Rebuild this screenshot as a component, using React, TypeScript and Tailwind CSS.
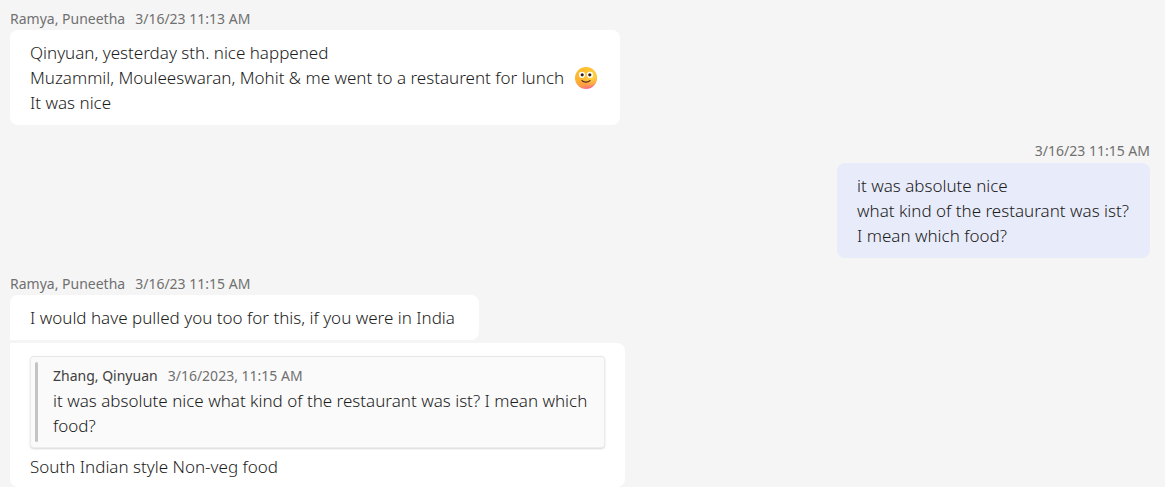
import type { ReactNode } from "react";

function SmileyIcon() {
  return (
    <svg
      viewBox="0 0 24 24"
      role="img"
      aria-label="Smile"
      className="size-6 shrink-0"
    >
      <defs>
        <linearGradient id="face" x1="0.35" y1="0" x2="0.6" y2="1">
          <stop offset="0" stopColor="#fdbf2f" />
          <stop offset="0.5" stopColor="#fdb42e" />
          <stop offset="0.8" stopColor="#fb9a48" />
          <stop offset="1" stopColor="#f8678c" />
        </linearGradient>
        <radialGradient id="glow" cx="0.75" cy="0.42" r="0.5">
          <stop offset="0" stopColor="#ffdc48" />
          <stop offset="1" stopColor="#ffd23a" stopOpacity="0" />
        </radialGradient>
      </defs>
      <circle cx="12" cy="12" r="11" fill="url(#face)" />
      <circle cx="12" cy="12" r="11" fill="url(#glow)" />
      <circle cx="8" cy="8.8" r="3.1" fill="#fff" />
      <circle cx="16" cy="8.8" r="3.1" fill="#fff" />
      <circle cx="8.2" cy="8.8" r="1.6" fill="#33211f" />
      <circle cx="15.8" cy="8.8" r="1.6" fill="#33211f" />
      <path
        d="M8 14.6c1.9 2 6.1 2 8 0"
        fill="none"
        stroke="#4d2a1c"
        strokeWidth="1.3"
        strokeLinecap="round"
      />
    </svg>
  );
}

function MessageHeader({ author, time }: { author?: string; time: string }) {
  return (
    <header
      className={`flex items-center gap-2.5 text-sm text-[#707070] ${author ? "h-[22px]" : "h-[23px] pb-px"}`}
    >
      {author && <span>{author}</span>}
      <time>{time}</time>
    </header>
  );
}

function Bubble({ className, children }: { className: string; children: ReactNode }) {
  return (
    <div className={`max-w-full px-5 leading-[25px] font-light ${className}`}>{children}</div>
  );
}

function Quote() {
  return (
    <blockquote className="mb-1.5 flex gap-[15px] rounded border border-[#ececec] border-t-[#e6e6e6] bg-[#fafafa] py-[5px] pr-3 pl-1 shadow-[0_1px_2px_rgba(0,0,0,0.16)]">
      <div className="w-[3px] shrink-0 rounded-sm bg-[#c4c4c4]" />
      <div className="pb-1">
        <div className="flex gap-2.5 pt-1 pb-0.5 text-sm font-normal">
          <cite className="text-[#404040] not-italic">Zhang, Qinyuan</cite>
          <time className="text-[#707070]">3/16/2023, 11:15 AM</time>
        </div>
        <p>it was absolute nice what kind of the restaurant was ist? I mean which food?</p>
      </div>
    </blockquote>
  );
}

export default function App() {
  return (
    <main className="flex min-h-screen flex-col gap-[15px] bg-[#f5f5f5] pt-2 pr-[15px] pl-2.5 font-['Noto_Sans','Open_Sans',sans-serif] text-[17px] text-[#1c1c1c]">
      <article>
        <MessageHeader author="Ramya, Puneetha" time="3/16/23 11:13 AM" />
        <Bubble className="w-[610px] rounded-lg bg-white py-2.5">
          <p>Qinyuan, yesterday sth. nice happened</p>
          <p className="flex items-center gap-2.5">
            Muzammil, Mouleeswaran, Mohit &amp; me went to a restaurent for lunch
            <SmileyIcon />
          </p>
          <p>It was nice</p>
        </Bubble>
      </article>

      <article className="flex flex-col items-end">
        <MessageHeader time="3/16/23 11:15 AM" />
        <Bubble className="w-[313px] rounded-lg bg-[#e8ebfa] py-2.5">
          <p>it was absolute nice</p>
          <p>what kind of the restaurant was ist?</p>
          <p>I mean which food?</p>
        </Bubble>
      </article>

      <article>
        <MessageHeader author="Ramya, Puneetha" time="3/16/23 11:15 AM" />
        <div className="flex flex-col gap-[3px]">
          <Bubble className="w-[469px] rounded-t-lg rounded-br-lg bg-white py-2.5">
            <p>I would have pulled you too for this, if you were in India</p>
          </Bubble>
          <Bubble className="w-[615px] rounded-r-lg rounded-bl-lg bg-white pt-[13px] pb-2">
            <Quote />
            <p>South Indian style Non-veg food</p>
          </Bubble>
        </div>
      </article>
    </main>
  );
}
